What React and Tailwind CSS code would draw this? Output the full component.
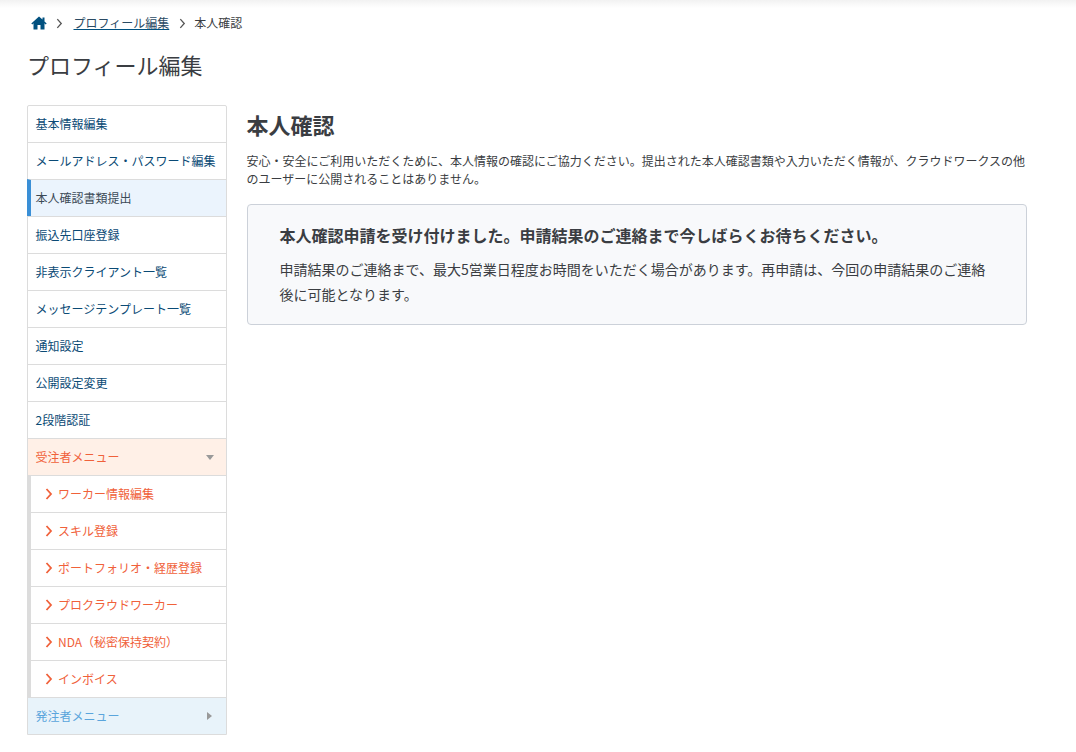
import React from "react";

const topItems = [
  { label: "基本情報編集" },
  { label: "メールアドレス・パスワード編集" },
  { label: "本人確認書類提出", active: true },
  { label: "振込先口座登録" },
  { label: "非表示クライアント一覧" },
  { label: "メッセージテンプレート一覧" },
  { label: "通知設定" },
  { label: "公開設定変更" },
  { label: "2段階認証" },
];

const workerItems = [
  "ワーカー情報編集",
  "スキル登録",
  "ポートフォリオ・経歴登録",
  "プロクラウドワーカー",
  "NDA（秘密保持契約）",
  "インボイス",
];

function Chevron({ className }) {
  return (
    <svg viewBox="0 0 8 12" className={className} fill="none" stroke="currentColor" strokeWidth="2">
      <path d="M1.5 1l4.5 5-4.5 5" />
    </svg>
  );
}

function Sidebar() {
  return (
    <ul className="w-[200px] shrink-0 border border-[#dcdcdc] rounded-t-[2px] text-[12px] leading-[36px]">
      {topItems.map((item, i) => (
        <li
          key={item.label}
          className={
            i === 0
              ? "h-[36px] pl-[7.5px] text-[#0a4a75]"
              : item.active
                ? "h-[37px] border-t border-[#dcdcdc] bg-[#ebf4fd] border-l-[4px] border-l-[#3a8fd6] -ml-px pl-[4.5px] text-[#3b4a57]"
                : "h-[37px] border-t border-[#dcdcdc] pl-[7.5px] text-[#0a4a75]"
          }
        >
          {item.label}
        </li>
      ))}
      <li className="h-[37px] border-t border-[#dcdcdc] bg-[#fff0e7] pl-[7.5px] pr-[12px] text-[#f0613a] flex items-center justify-between">
        受注者メニュー
        <span className="w-0 h-0 border-x-[4px] border-x-transparent border-t-[5px] border-t-[#999999]" />
      </li>
      <li className="border-l-[3px] border-[#dcdcdc]">
        {workerItems.map((label) => (
          <div key={label} className="h-[37px] border-t border-[#dcdcdc] pl-[14px] flex items-center text-[#f0613a]">
            <Chevron className="w-[8px] h-[12px] mr-[5px] shrink-0 [stroke-width:1.8]" />
            {label}
          </div>
        ))}
      </li>
      <li className="h-[37px] border-t border-[#dcdcdc] bg-[#e8f3fa] pl-[7.5px] pr-[14px] text-[#5aa5dc] flex items-center justify-between">
        発注者メニュー
        <span className="w-0 h-0 border-y-[4px] border-y-transparent border-l-[5px] border-l-[#999999]" />
      </li>
    </ul>
  );
}

export default function App() {
  return (
    <div className="h-[752px] overflow-hidden bg-white text-[#3a3d42] font-['Noto_Sans_CJK_JP','Noto_Sans',sans-serif]">
      <div className="h-2 bg-gradient-to-b from-[#f2f2f2] to-white" />
      <nav className="flex items-center h-[16px] mt-[7px] pl-[31px] text-[12px]">
        <svg viewBox="0 0 16 14" className="w-[16px] h-[14px] text-[#00507f]" fill="currentColor">
          <path d="M8 0.5 0.3 7.4l1 1L2.5 7.3V13.5H6.5V9h3v4.5h4V7.3l1.2 1.1 1-1-2.2-2V1.5h-2v2L8 .5z" />
        </svg>
        <Chevron className="w-[7px] h-[11px] ml-[9px] mr-[10.5px] text-[#555555] [stroke-width:1.5]" />
        <a className="text-[#2a4a63] underline decoration-[#00507f]">プロフィール編集</a>
        <Chevron className="w-[7px] h-[11px] ml-[9.5px] mr-[8.5px] text-[#555555] [stroke-width:1.5]" />
        <span>本人確認</span>
      </nav>
      <h1 className="ml-[27px] mt-[15px] text-[22px] leading-[36px] font-normal">プロフィール編集</h1>
      <div className="flex gap-[19.5px] pl-[27px] mt-[23px]">
        <Sidebar />
        <main className="w-[780px]">
          <h2 className="text-[22px] leading-[32px] font-bold mt-[3px]">本人確認</h2>
          <p className="text-[12px] leading-[18.6px] mt-[11.5px]">
            安心・安全にご利用いただくために、本人情報の確認にご協力ください。提出された本人確認書類や入力いただく情報が、クラウドワークスの他のユーザーに公開されることはありません。
          </p>
          <section className="mt-[15.3px] h-[121px] border border-[#ccd1d9] rounded-[4px] bg-[#f8f9fb] pl-[32px] pr-[31px] pt-[18px]">
            <h3 className="text-[16px] leading-[24px] font-bold">本人確認申請を受け付けました。申請結果のご連絡まで今しばらくお待ちください。</h3>
            <p className="text-[14px] leading-[25.6px] mt-[9.6px]">
              申請結果のご連絡まで、最大5営業日程度お時間をいただく場合があります。再申請は、今回の申請結果のご連絡後に可能となります。
            </p>
          </section>
        </main>
      </div>
    </div>
  );
}
